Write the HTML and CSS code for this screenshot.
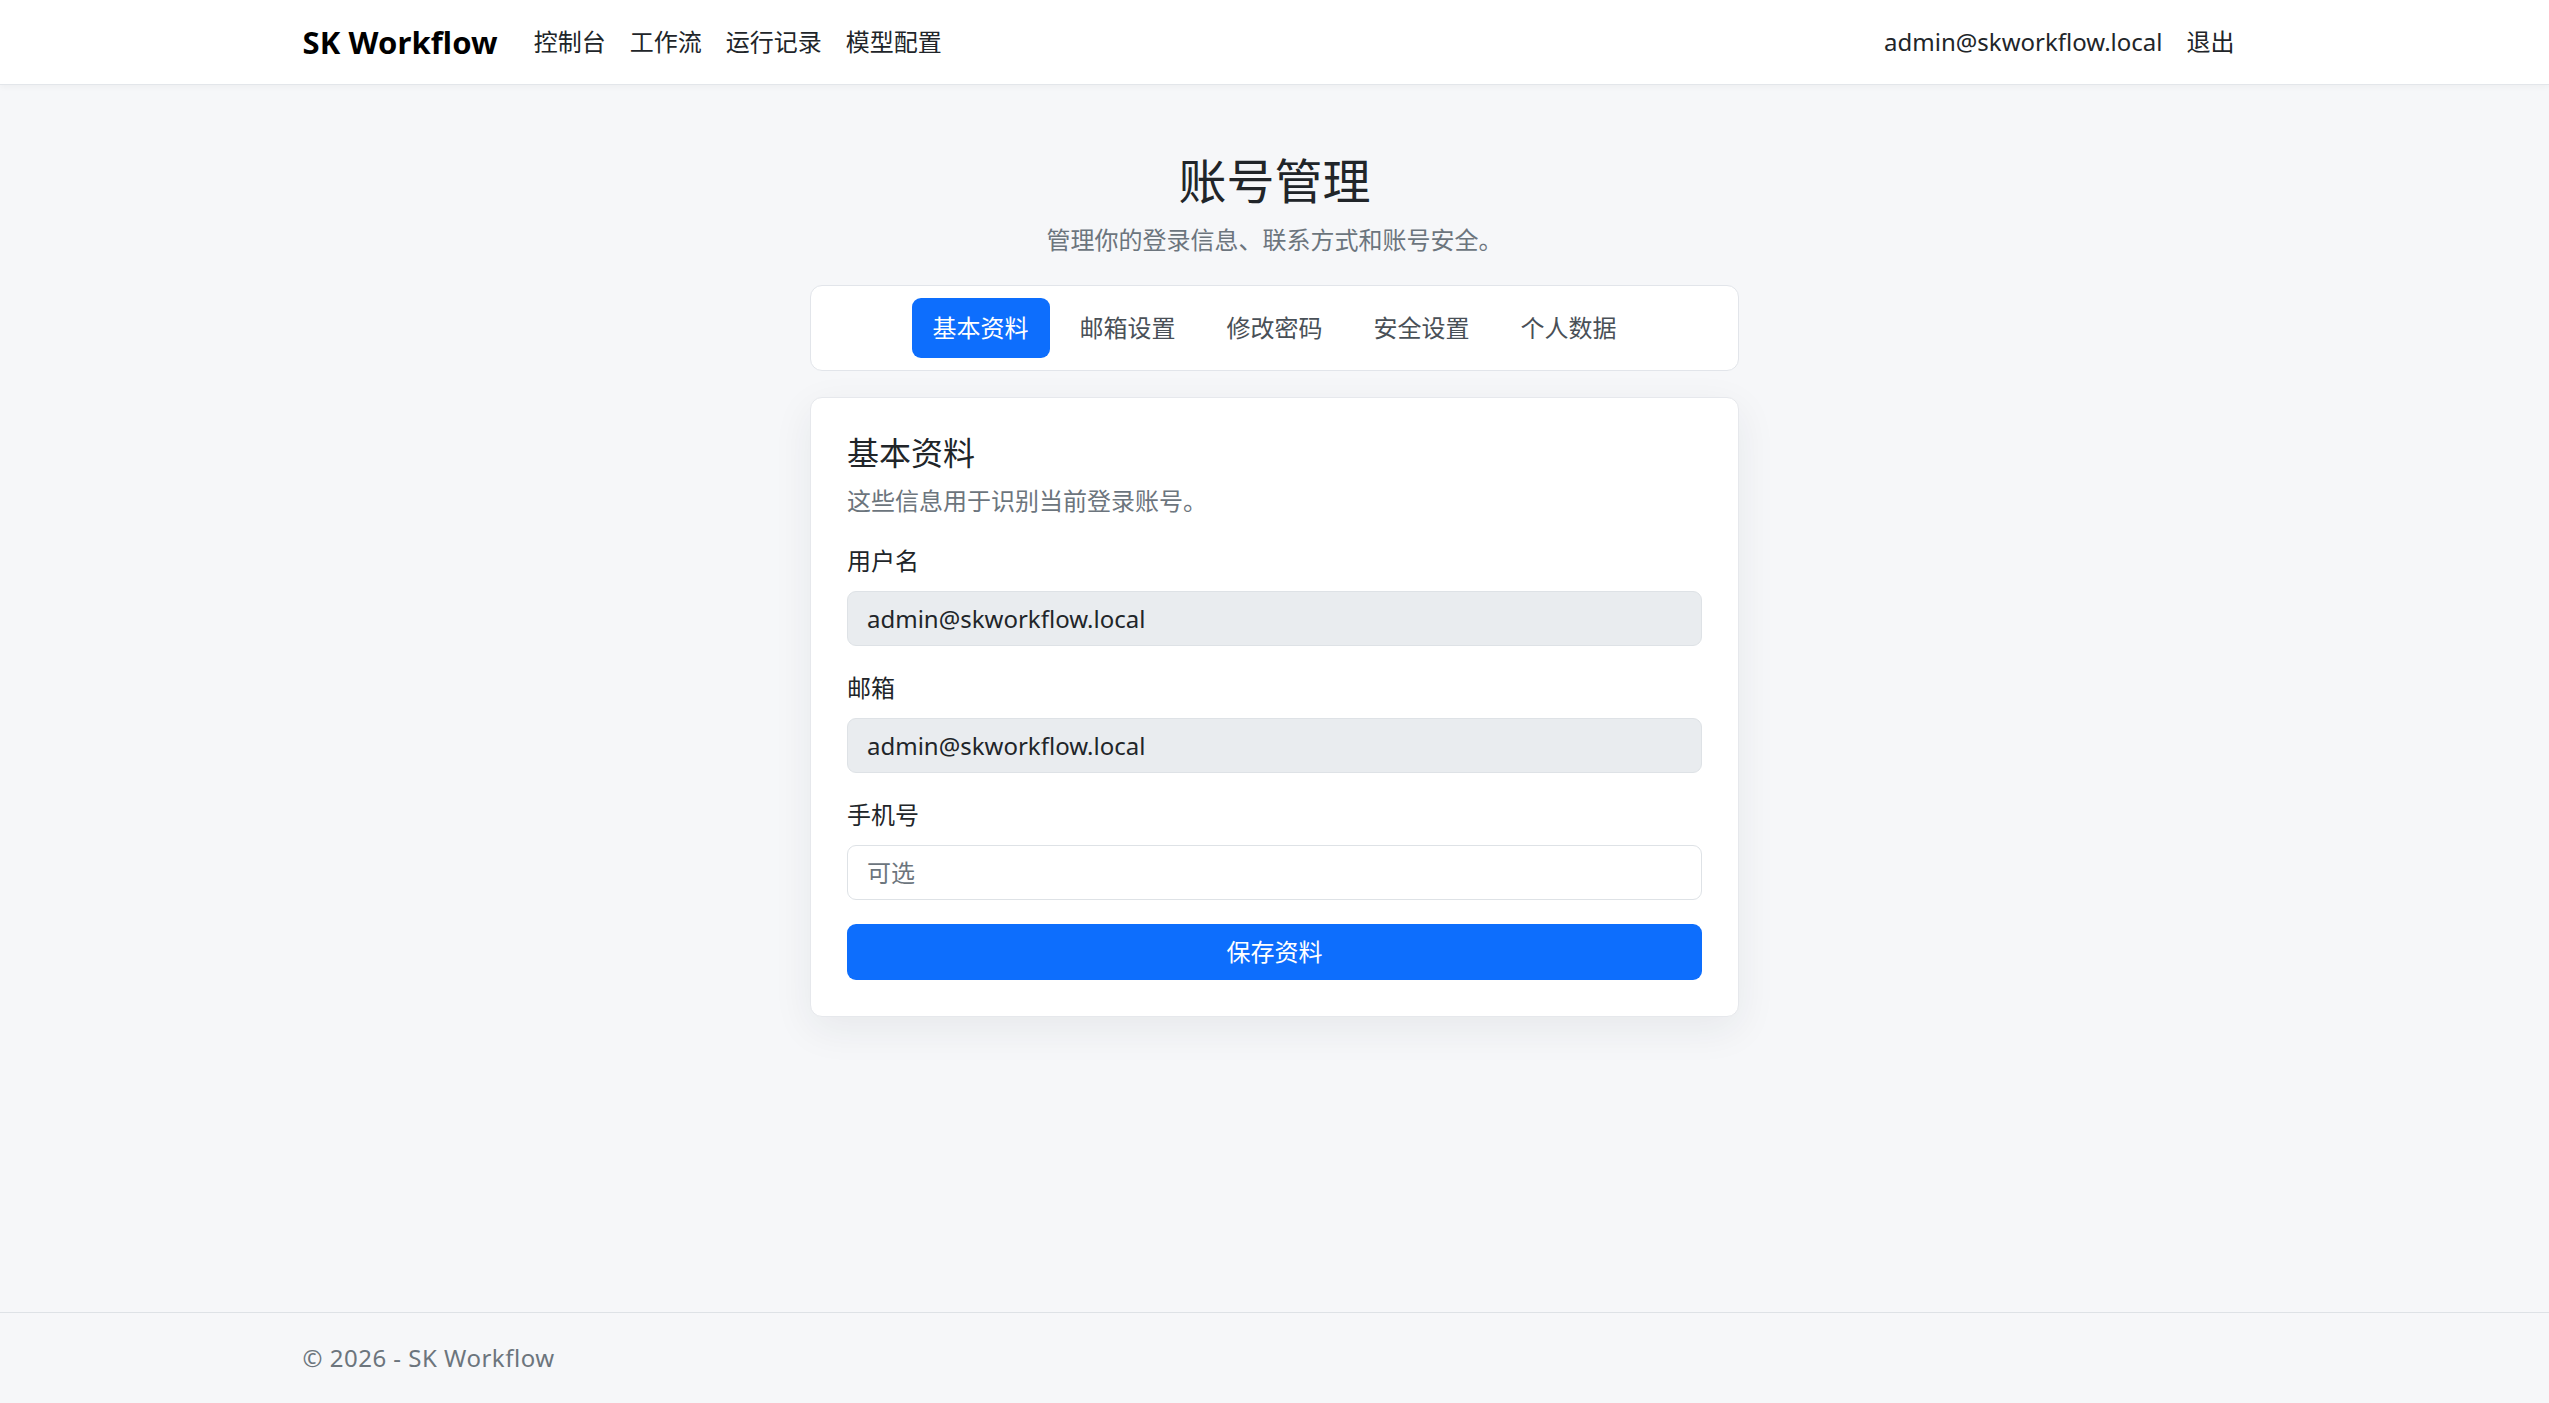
FILE: index.html
```html
<!DOCTYPE html>
<html lang="zh-CN">
<head>
    <meta charset="UTF-8">
    <meta name="viewport" content="width=device-width, initial-scale=1">
    <title>账号管理 - SK Workflow</title>
    <link rel="stylesheet" href="styles.css">
</head>
<body>

<header class="navbar">
    <div class="container nav-inner">
        <a class="brand" href="#">SK Workflow</a>
        <nav class="nav-links">
            <a href="#">控制台</a>
            <a href="#">工作流</a>
            <a href="#">运行记录</a>
            <a href="#">模型配置</a>
        </nav>
        <div class="nav-user">
            <span class="nav-text">admin@skworkflow.local</span>
            <a href="#">退出</a>
        </div>
    </div>
</header>

<main class="container page">
    <div class="page-head">
        <h1>账号管理</h1>
        <p class="muted">管理你的登录信息、联系方式和账号安全。</p>
    </div>

    <div class="panel">
        <div class="tabs">
            <a href="#" class="tab active">基本资料</a>
            <a href="#" class="tab">邮箱设置</a>
            <a href="#" class="tab">修改密码</a>
            <a href="#" class="tab">安全设置</a>
            <a href="#" class="tab">个人数据</a>
        </div>

        <section class="card">
            <h2>基本资料</h2>
            <p class="muted">这些信息用于识别当前登录账号。</p>
            <form>
                <div class="field">
                    <label for="username">用户名</label>
                    <input type="text" id="username" value="admin@skworkflow.local" readonly>
                </div>
                <div class="field">
                    <label for="email">邮箱</label>
                    <input type="text" id="email" value="admin@skworkflow.local" readonly>
                </div>
                <div class="field">
                    <label for="phone">手机号</label>
                    <input type="text" id="phone" placeholder="可选">
                </div>
                <button type="button">保存资料</button>
            </form>
        </section>
    </div>
</main>

<footer class="footer">
    <div class="container">&copy; 2026 - SK Workflow</div>
</footer>

</body>
</html>
```

FILE: styles.css
```css
* {
    box-sizing: border-box;
}

html, body {
    height: 100%;
}

body {
    margin: 0;
    display: flex;
    flex-direction: column;
    min-height: 100vh;
    font-family: "Noto Sans", "Noto Sans CJK SC", sans-serif;
    font-size: 24px;
    line-height: 1.5;
    color: #212529;
    background: #f6f7f9;
}

a {
    color: inherit;
    text-decoration: none;
}

.container {
    width: 1980px;
    margin: 0 auto;
    padding: 0 18px;
}

/* top bar */
.navbar {
    background: #fff;
    border-bottom: 1px solid #e3e6ea;
    box-shadow: 0 2px 6px rgba(0, 0, 0, 0.04);
    padding: 12px 0;
}

.nav-inner {
    display: flex;
    align-items: center;
}

.brand {
    font-size: 31px;
    font-weight: 700;
    letter-spacing: 0.1px;
    margin-right: 24px;
    color: #000;
}

.nav-links,
.nav-user {
    display: flex;
}

.nav-links a,
.nav-user a,
.nav-text {
    padding: 12px;
}

.nav-user {
    margin-left: auto;
}

/* page */
.page {
    flex: 1;
    padding-top: 67px;
    padding-bottom: 48px;
}

.page-head {
    text-align: center;
    margin-bottom: 27px;
}

h1 {
    font-size: 48px;
    font-weight: 400;
    line-height: 1.2;
    margin: 0 0 12px;
}

.muted {
    color: #6c757d;
    margin: 0;
}

.panel {
    width: 929px;
    margin: 0 auto;
}

.tabs {
    display: flex;
    justify-content: center;
    gap: 9px;
    background: #fff;
    border: 1px solid #e2e5ea;
    border-radius: 12px;
    padding: 12px;
    margin-bottom: 26px;
}

.tab {
    padding: 12px 21px;
    line-height: 36px;
    border-radius: 9px;
    color: #495057;
}

.tab.active {
    background: #0d6efd;
    color: #fff;
}

.card {
    background: #fff;
    border: 1px solid #e6e8ec;
    border-radius: 12px;
    padding: 36px;
    box-shadow: 0 12px 40px rgba(30, 40, 60, 0.07);
}

.card h2 {
    font-size: 32px;
    font-weight: 400;
    line-height: 1.2;
    margin: 0 0 11px;
}

.card .muted {
    margin-bottom: 24px;
}

.field {
    margin-bottom: 24px;
}

.field label {
    display: block;
    margin-bottom: 12px;
}

input {
    display: block;
    width: 100%;
    height: 55px;
    padding: 0 19px;
    font: inherit;
    color: #212529;
    background: #fff;
    border: 1px solid #dee2e6;
    border-radius: 9px;
}

input[readonly] {
    background: #e9ecef;
}

input::placeholder {
    color: #6c757d;
}

button {
    display: block;
    width: 100%;
    height: 56px;
    font: inherit;
    color: #fff;
    background: #0d6efd;
    border: 0;
    border-radius: 9px;
    cursor: pointer;
}

/* footer */
.footer {
    border-top: 1px solid #dee2e6;
    padding: 27px 0;
    color: #6c757d;
    letter-spacing: 0.5px;
}
```
